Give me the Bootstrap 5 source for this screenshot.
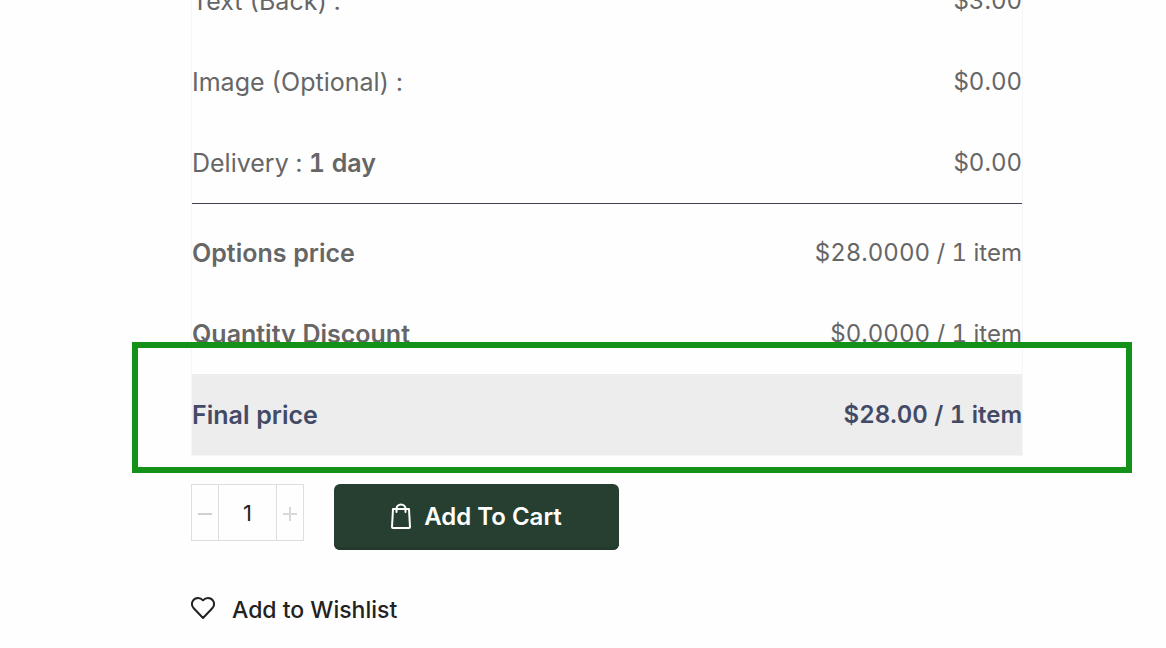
<!DOCTYPE html>
<html lang="en">
<head>
<meta charset="utf-8">
<meta name="viewport" content="width=device-width, initial-scale=1">
<title>Product price</title>
<link href="https://cdn.jsdelivr.net/npm/bootstrap@5.3.0/dist/css/bootstrap.min.css" rel="stylesheet">
<style>
body{font-family:Inter,"Liberation Sans",sans-serif;font-size:24px;line-height:32px;color:#222;background:#fefefe;overflow:hidden}
.product-panel{padding:0 143px 0 191px;margin-top:-41px}
.price-table{border:1px solid #f5f5f5;border-collapse:separate;border-spacing:0;color:#666;font-variant-numeric:tabular-nums}
.price-table th,.price-table td{height:81px;padding:0;vertical-align:middle;font-weight:400}
.price-table th{font-size:25px}
.price-table b,.price-table th.strong-label{font-weight:600}
.price-table .rule-row td{height:9px;border-top:1px solid #3f4458}
.price-table .final-row>*{background:#ededed;color:#434a66;font-weight:600}
.final-frame{left:-59px;right:-109px;bottom:-17px;height:131px;border:6px solid #149118;pointer-events:none}
.buy-row{margin-top:28px;gap:30px}
.qty-box{width:113px;height:57px;border:1px solid #dedede}
.qty-box button{width:26px;border:0;background:none;padding:0;color:#d0d0d0}
.qty-box input{width:59px;border:0;border-left:1px solid #dedede;border-right:1px solid #dedede;text-align:center;font-size:22px;color:#222;background:none;padding:0;border-radius:0}
.cart-btn{width:285px;height:66px;background:#263f31;color:#fff;border:0;border-radius:6px;font-size:24px;font-weight:600;gap:13px;box-shadow:inset 0 -3px 0 #243a2e}
.wish-link{margin-top:44px;gap:17px;color:#222;font-size:23px;font-weight:500}
</style>
</head>
<body>
<main class="product-panel">
<div class="position-relative">
<table class="price-table w-100">
<tbody>
<tr><th scope="row">Text (Back) :</th><td class="text-end">$3.00</td></tr>
<tr><th scope="row">Image (Optional) :</th><td class="text-end">$0.00</td></tr>
<tr><th scope="row">Delivery : <b>1 day</b></th><td class="text-end">$0.00</td></tr>
<tr class="rule-row"><td colspan="2"></td></tr>
<tr><th scope="row" class="strong-label">Options price</th><td class="text-end">$28.0000 / 1 item</td></tr>
<tr><th scope="row" class="strong-label">Quantity Discount</th><td class="text-end">$0.0000 / 1 item</td></tr>
<tr class="final-row"><th scope="row">Final price</th><td class="text-end">$28.00 / 1 item</td></tr>
</tbody>
</table>
<div class="final-frame position-absolute"></div>
</div>
<form class="buy-row d-flex align-items-start">
<div class="qty-box d-flex">
<button type="button" aria-label="Decrease quantity" class="d-flex align-items-center justify-content-center"><svg width="14" height="16" stroke="currentColor" stroke-width="2"><path d="M0 9H14"/></svg></button>
<input type="text" value="1" aria-label="Quantity">
<button type="button" aria-label="Increase quantity" class="d-flex align-items-center justify-content-center"><svg width="14" height="16" stroke="currentColor" stroke-width="2" stroke-opacity=".8"><path d="M0 9H14M7 2V16"/></svg></button>
</div>
<button type="button" class="cart-btn btn d-flex align-items-center justify-content-center">
<svg width="20" height="28" viewBox="0 0 20 28" fill="none" stroke="currentColor" stroke-width="2" stroke-linecap="round" stroke-linejoin="round"><path d="M2 6H18L19 24Q19 25 18 25H2Q1 25 1 24ZM5.500 9V6a4.500 4.500 0 0 1 9 0V9"/></svg>
<span>Add To Cart</span></button>
</form>
<a href="#" class="wish-link d-inline-flex align-items-center text-decoration-none">
<svg width="24" height="26" viewBox="0 0 24 26" fill="none" stroke="currentColor" stroke-width="2" stroke-linejoin="round"><path d="M12 21L2.500 11C-1 6.500 2 1 7 1Q10 1 12 3.300Q14 1 17 1C22 1 25 6.500 21.500 11Z"/></svg>
<span>Add to Wishlist</span></a>
</main>
<script src="https://cdn.jsdelivr.net/npm/bootstrap@5.3.0/dist/js/bootstrap.bundle.min.js"></script>
</body>
</html>
